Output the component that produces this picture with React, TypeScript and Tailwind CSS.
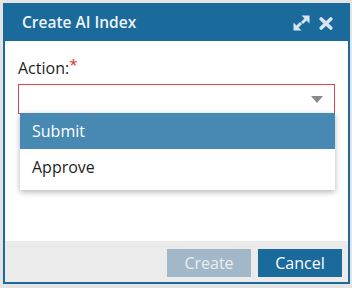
import React from 'react';

function ExpandIcon() {
  return (
    <svg width="17" height="16" viewBox="0 0 17 16" fill="#d6e5ef">
      <polygon points="8.5,0.5 16.5,0.5 16.5,8.5" />
      <line x1="13" y1="4" x2="9" y2="8" stroke="#d6e5ef" strokeWidth="3" />
      <polygon points="0.5,7.5 0.5,15.5 8.5,15.5" />
      <line x1="4" y1="12" x2="8" y2="8" stroke="#d6e5ef" strokeWidth="3" />
    </svg>
  );
}

function CloseIcon() {
  return (
    <svg width="14" height="13" viewBox="0 0 14 13">
      <path d="M2.2 2 L11.8 11 M11.8 2 L2.2 11" stroke="#d6e5ef" strokeWidth="3.6" strokeLinecap="round" />
    </svg>
  );
}

export default function App() {
  return (
    <div
      className="w-[352px] h-[288px] bg-[#e4e4e4] pt-[3px] pl-[3px] pr-[2px] pb-[4px]"
      style={{ fontFamily: '"Open Sans", sans-serif' }}
    >
      <div className="flex flex-col h-full border-2 border-[#1b6a9c] bg-white">
        <div className="h-[36px] bg-[#1b6a9c] flex items-center pl-[17px] pr-[15px]">
          <span className="text-[15.5px] font-semibold text-[#eef4f8] flex-1">Create AI Index</span>
          <div className="flex items-center gap-[9px]">
            <ExpandIcon />
            <CloseIcon />
          </div>
        </div>

        <div className="flex-1 relative px-[13px] pt-[15px]">
          <div className="text-[16px] text-[#1e1e1e] leading-[24px] font-medium">
            Action:<span className="text-[#e5252a] align-top text-[15px] leading-[16px]">*</span>
          </div>
          <div className="mt-[4px] h-[30px] border border-[#e2434f] flex items-center justify-end pr-[11px]">
            <svg width="12" height="7" viewBox="0 0 12 7">
              <polygon points="0,0 12,0 6,7" fill="#8a8a8a" />
            </svg>
          </div>
          <div className="absolute left-[15px] top-[72px] w-[315px] bg-white pb-[5px] shadow-[0_2px_6px_rgba(0,0,0,0.3)]">
            <div className="h-[36px] bg-[#4789b3] text-white text-[16px] flex items-center pl-[12px]">Submit</div>
            <div className="h-[36px] text-[#1e1e1e] text-[16px] flex items-center pl-[12px]">Approve</div>
          </div>
        </div>

        <div className="h-[41px] bg-[#ebebeb] flex items-start justify-end gap-[7px] pt-[8px] pr-[6px]">
          <button className="w-[84px] h-[28px] bg-[#a2b8c8] text-[#e8eef3] text-[16px]">Create</button>
          <button className="w-[84px] h-[28px] bg-[#1b6a9c] text-white text-[16px]">Cancel</button>
        </div>
      </div>
    </div>
  );
}
